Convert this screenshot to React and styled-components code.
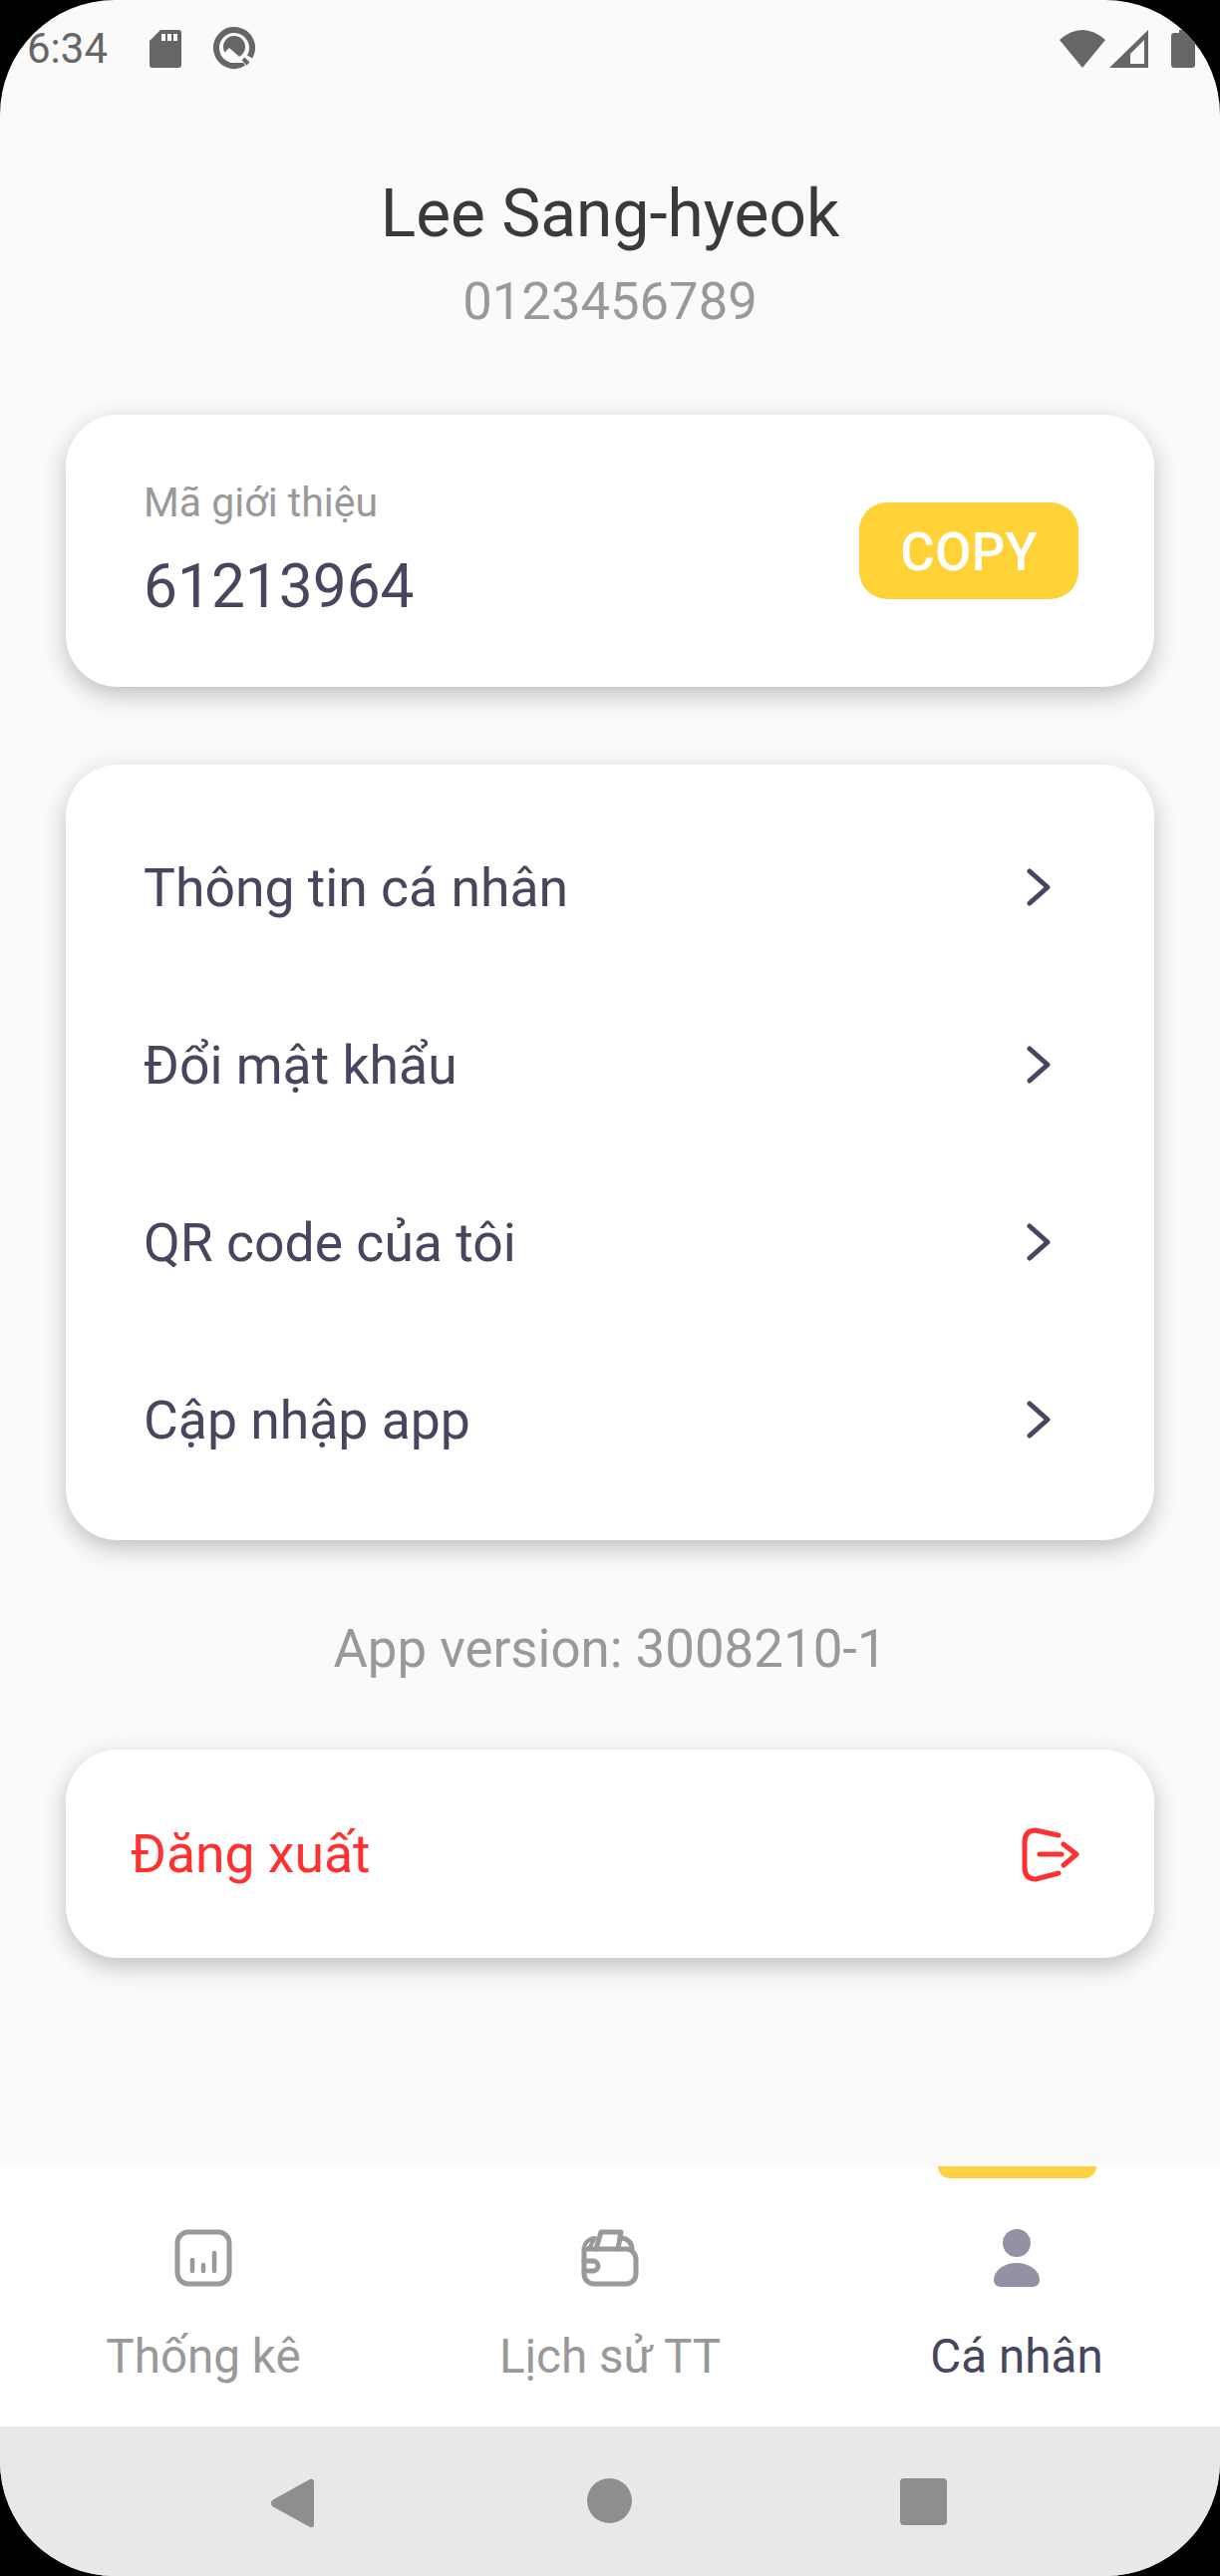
import React from "react";
import styled, { createGlobalStyle } from "styled-components";

const GlobalStyle = createGlobalStyle`
  html, body {
    margin: 0;
    padding: 0;
    background: #000;
  }
  * {
    box-sizing: border-box;
  }
`;

const Screen = styled.div`
  width: 1224px;
  height: 2584px;
  display: flex;
  flex-direction: column;
  overflow: hidden;
  border-radius: 115px;
  background: #fafafa;
  font-family: Roboto, "Noto Sans", sans-serif;
`;

const StatusBar = styled.div`
  height: 98px;
  flex: none;
  display: flex;
  align-items: flex-start;
  justify-content: space-between;
  padding: 27px 25px 0 27px;
  color: #666;
`;

const StatusGroup = styled.div`
  display: flex;
  align-items: center;
  height: 44px;
`;

const Clock = styled.span`
  font-size: 42px;
  line-height: 46px;
  width: 81px;
`;

const Glyph = styled.svg`
  display: block;
  flex: none;
  margin-left: ${(p) => p.$offset || 0}px;
`;

const Content = styled.main`
  flex: 1;
  display: flex;
  flex-direction: column;
  padding: 0 66px;
`;

const Header = styled.header`
  height: 318px;
  padding-top: 82px;
  text-align: center;
`;

const Name = styled.h1`
  margin: 0;
  font-size: 65.8px;
  line-height: 70px;
  font-weight: 400;
  color: #3a3a3a;
`;

const Phone = styled.div`
  margin-top: 22px;
  font-size: 52.6px;
  line-height: 60px;
  color: #999;
`;

const Card = styled.section`
  background: #fff;
  border-radius: 52px;
  box-shadow: 0 8px 24px rgba(0, 0, 0, 0.24);
`;

const CodeCard = styled(Card)`
  height: 273px;
  display: flex;
  align-items: center;
  justify-content: space-between;
  padding: 0 76px 0 78px;
`;

const CodeLabel = styled.div`
  font-size: 41px;
  line-height: 44px;
  color: #999;
`;

const CodeValue = styled.div`
  margin-top: 28px;
  font-size: 60.4px;
  line-height: 70px;
  color: #47465f;
`;

const CopyButton = styled.button`
  width: 220px;
  height: 97px;
  border: 0;
  padding: 2px 0 0;
  border-radius: 28px;
  background: #ffd337;
  color: #fff;
  font-family: inherit;
  font-size: 53px;
  font-weight: 500;
`;

const MenuCard = styled(Card)`
  margin-top: 78px;
  height: 778px;
  padding: 34px 0 32px;
`;

const MenuRow = styled.div`
  height: 178px;
  display: flex;
  align-items: center;
  justify-content: space-between;
  padding: 0 104px 0 78px;
  font-size: 53.5px;
  color: #47465f;
`;

const Version = styled.div`
  height: 210px;
  padding-top: 78px;
  text-align: center;
  font-size: 52.8px;
  line-height: 62px;
  color: #999;
`;

const LogoutCard = styled(Card)`
  height: 209px;
  display: flex;
  align-items: center;
  justify-content: space-between;
  padding: 0 75px 0 65px;
  font-size: 53.5px;
  color: #ff3030;
`;

const TabBar = styled.nav`
  height: 261px;
  flex: none;
  display: grid;
  grid-template-columns: repeat(3, 1fr);
  background: #fff;
`;

const Tab = styled.div`
  position: relative;
  display: flex;
  flex-direction: column;
  align-items: center;
  padding-top: 63px;
  font-size: 47.6px;
  color: ${(p) => (p.$active ? "#47465f" : "#999")};
`;

const TabIcon = styled.div`
  height: 58px;
  display: flex;
  align-items: center;
  justify-content: center;
`;

const TabLabel = styled.div`
  margin-top: 42px;
  line-height: 56px;
`;

const Indicator = styled.div`
  position: absolute;
  top: 0;
  left: 125px;
  width: 159px;
  height: 12px;
  border-radius: 0 0 14px 14px;
  background: #ffd040;
`;

const SystemBar = styled.div`
  height: 150px;
  flex: none;
  display: flex;
  align-items: flex-start;
  padding: 52px 0 0 271px;
  background: #e8e8e8;
  color: #8e8e8e;
`;

const Chevron = () => (
  <svg width="24" height="38" viewBox="0 0 24 38" fill="none" stroke="#47465f" strokeWidth="5" strokeLinecap="round" strokeLinejoin="round">
    <path d="M3 3 L21 19 L3 35" />
  </svg>
);

const SdIcon = () => (
  <Glyph $offset={42} width="32" height="38" viewBox="0 0 32 38" fill="currentColor">
    <path fillRule="evenodd" d="M11 0H29a3 3 0 0 1 3 3V35a3 3 0 0 1-3 3H3a3 3 0 0 1-3-3V11ZM12 4V11H16V4ZM18 4V11H22V4ZM24 4V11H28V4Z" />
  </Glyph>
);

const QIcon = () => (
  <Glyph $offset={31} width="44" height="44" viewBox="0 0 44 44" fill="none" stroke="currentColor">
    <path d="M31.5 36.3 A18 18 0 1 1 37.6 30" strokeWidth="6" />
    <circle cx="22" cy="20" r="11" fill="currentColor" stroke="none" />
    <path d="M17 21 L34 36 H20 Q16 36 14 32 L12 26Z" fill="#fafafa" stroke="none" />
    <path d="M31 32 L36 37" strokeWidth="4" />
  </Glyph>
);

const WifiIcon = () => (
  <Glyph width="46" height="38" viewBox="0 0 46 38" fill="currentColor">
    <path d="M0 10 Q23 -10 46 10 L23 38Z" />
  </Glyph>
);

const SignalIcon = () => (
  <Glyph $offset={4} width="39" height="38" viewBox="0 0 39 38" fill="currentColor">
    <path fillRule="evenodd" d="M0 38 L39 0 V38ZM21 24 V34 H35 V10Z" />
  </Glyph>
);

const BatteryIcon = () => (
  <Glyph $offset={23} width="24" height="38" viewBox="0 0 24 38" fill="currentColor">
    <path d="M8 0H16V3H21a3 3 0 0 1 3 3V35a3 3 0 0 1-3 3H3a3 3 0 0 1-3-3V6a3 3 0 0 1 3-3H8Z" />
  </Glyph>
);

const StatsIcon = () => (
  <svg width="58" height="58" viewBox="0 0 58 58" fill="none" stroke="#999" strokeWidth="5" strokeLinecap="round">
    <rect x="3" y="3" width="52" height="52" rx="11" />
    <path d="M18 31V42M29 36V42M40 24V42" strokeWidth="4.5" />
  </svg>
);

const WalletIcon = () => (
  <svg width="58" height="58" viewBox="0 0 58 58" fill="none" stroke="#999" strokeWidth="5" strokeLinecap="round" strokeLinejoin="round">
    <path d="M3 20 H45 a10 10 0 0 1 10 10 V45 a10 10 0 0 1-10 10 H13 a10 10 0 0 1-10-10 V20" />
    <path d="M3 22 V20 a11 11 0 0 1 11-11 M8 20 L13 10" strokeWidth="4" />
    <path d="M15 20 L20 3 H40 L37 20" />
    <path d="M41 9 a11 11 0 0 1 10 11" />
    <path d="M3 32 H12 a5 5 0 0 1 0 10 H3" />
  </svg>
);

const PersonIcon = () => (
  <svg width="46" height="58" viewBox="0 0 46 58" fill="#9392a5">
    <circle cx="23" cy="14" r="14" />
    <path d="M23 34 C36 34 46 42 46 51 C46 55 43 58 39 58 H7 C3 58 0 55 0 51 C0 42 10 34 23 34Z" />
  </svg>
);

const LogoutIcon = () => (
  <svg width="58" height="56" viewBox="0 0 58 56" fill="none" stroke="#ff3030" strokeWidth="5" strokeLinecap="round" strokeLinejoin="round">
    <path d="M37 9 L14 4 Q3 4 3 16 V41 Q3 53 14 53 L37 47" />
    <path d="M18 28 H40 M42 18 L55 28 L42 39" />
  </svg>
);

const menuItems = ["Thông tin cá nhân", "Đổi mật khẩu", "QR code của tôi", "Cập nhập app"];

export default function App() {
  return (
    <>
      <GlobalStyle />
      <Screen>
        <StatusBar>
          <StatusGroup>
            <Clock>6:34</Clock>
            <SdIcon />
            <QIcon />
          </StatusGroup>
          <StatusGroup>
            <WifiIcon />
            <SignalIcon />
            <BatteryIcon />
          </StatusGroup>
        </StatusBar>
        <Content>
          <Header>
            <Name>Lee Sang-hyeok</Name>
            <Phone>0123456789</Phone>
          </Header>
          <CodeCard>
            <div>
              <CodeLabel>Mã giới thiệu</CodeLabel>
              <CodeValue>61213964</CodeValue>
            </div>
            <CopyButton>COPY</CopyButton>
          </CodeCard>
          <MenuCard>
            {menuItems.map((item) => (
              <MenuRow key={item}>
                {item}
                <Chevron />
              </MenuRow>
            ))}
          </MenuCard>
          <Version>App version: 3008210-1</Version>
          <LogoutCard>
            Đăng xuất
            <LogoutIcon />
          </LogoutCard>
        </Content>
        <TabBar>
          <Tab>
            <TabIcon><StatsIcon /></TabIcon>
            <TabLabel>Thống kê</TabLabel>
          </Tab>
          <Tab>
            <TabIcon><WalletIcon /></TabIcon>
            <TabLabel>Lịch sử TT</TabLabel>
          </Tab>
          <Tab $active>
            <Indicator />
            <TabIcon><PersonIcon /></TabIcon>
            <TabLabel>Cá nhân</TabLabel>
          </Tab>
        </TabBar>
        <SystemBar>
          <Glyph width="44" height="50" viewBox="0 0 44 50" fill="currentColor">
            <path d="M40 1 L2 22 Q0 25 2 28 L40 49 Q44 50 44 46 V4 Q44 0 40 1Z" />
          </Glyph>
          <Glyph $offset={274} width="45" height="45" viewBox="0 0 45 45" fill="currentColor">
            <circle cx="22.5" cy="22.5" r="22.5" />
          </Glyph>
          <Glyph $offset={269} width="47" height="47" viewBox="0 0 47 47" fill="currentColor">
            <rect width="47" height="47" rx="4" />
          </Glyph>
        </SystemBar>
      </Screen>
    </>
  );
}
